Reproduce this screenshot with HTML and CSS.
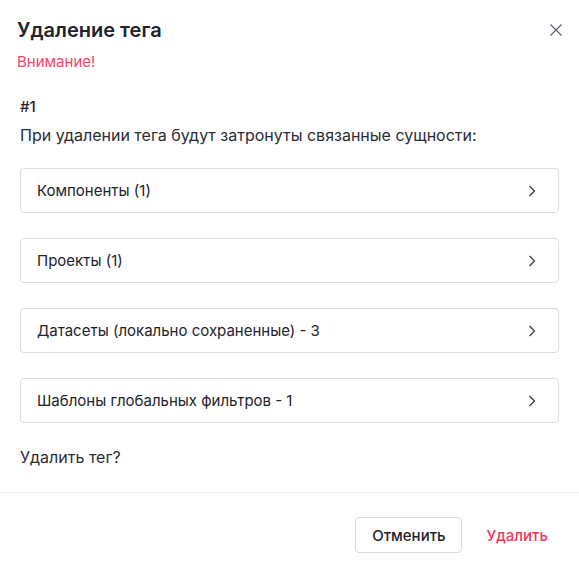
FILE: index.html
```html
<!DOCTYPE html>
<html lang="ru">
<head>
<meta charset="utf-8">
<link rel="stylesheet" href="styles.css">
</head>
<body>
<div class="modal">
  <div class="header">
    <div class="title-row">
      <h1 class="title">Удаление тега</h1>
      <button class="close" aria-label="Закрыть">
        <svg width="12" height="12" viewBox="0 0 12 12"><path d="M0.5 0.5L11.5 11.5M11.5 0.5L0.5 11.5" stroke="#5c5e6b" stroke-width="1.1" fill="none"/></svg>
      </button>
    </div>
    <div class="warning">Внимание!</div>
  </div>
  <div class="content">
    <div class="tag-id">#1</div>
    <div class="desc">При удалении тега будут затронуты связанные сущности:</div>
    <div class="list">
      <div class="item"><span>Компоненты (1)</span><svg class="chev" width="8" height="12" viewBox="0 0 8 12"><path d="M1.5 1L6.5 6L1.5 11" stroke="#3a3c47" stroke-width="1.3" fill="none"/></svg></div>
      <div class="item"><span>Проекты (1)</span><svg class="chev" width="8" height="12" viewBox="0 0 8 12"><path d="M1.5 1L6.5 6L1.5 11" stroke="#3a3c47" stroke-width="1.3" fill="none"/></svg></div>
      <div class="item"><span>Датасеты (локально сохраненные) - 3</span><svg class="chev" width="8" height="12" viewBox="0 0 8 12"><path d="M1.5 1L6.5 6L1.5 11" stroke="#3a3c47" stroke-width="1.3" fill="none"/></svg></div>
      <div class="item"><span>Шаблоны глобальных фильтров - 1</span><svg class="chev" width="8" height="12" viewBox="0 0 8 12"><path d="M1.5 1L6.5 6L1.5 11" stroke="#3a3c47" stroke-width="1.3" fill="none"/></svg></div>
    </div>
    <div class="question">Удалить тег?</div>
  </div>
  <div class="footer">
    <button class="btn btn-cancel">Отменить</button>
    <button class="btn btn-delete">Удалить</button>
  </div>
</div>
</body>
</html>
```
FILE: styles.css
```css
* { box-sizing: border-box; }
html, body { margin: 0; padding: 0; background: #fff; }
body {
  font-family: Inter, "Noto Sans", sans-serif;
  color: #22232b;
  width: 579px;
  height: 571px;
}
.modal { width: 579px; }
.header { padding: 16px 17px 0 17px; }
.title-row {
  display: flex;
  justify-content: space-between;
  align-items: center;
}
.title {
  margin: 0;
  font-size: 20px;
  line-height: 28px;
  font-weight: 600;
  color: #22232b;
}
.close {
  border: 0;
  background: none;
  padding: 0;
  width: 12px;
  height: 12px;
  display: flex;
}
.warning {
  margin-top: 8px;
  font-size: 15px;
  line-height: 20px;
  color: #f5456a;
  font-weight: 400;
}
.content { padding: 24px 20px 0 20px; }
.tag-id {
  font-size: 15px;
  line-height: 22px;
  font-weight: 500;
}
.desc {
  margin-top: 6px;
  font-size: 16px;
  line-height: 22px;
  color: #2b2c35;
}
.list {
  margin-top: 22px;
  display: flex;
  flex-direction: column;
  gap: 25px;
}
.item {
  height: 45px;
  border: 1px solid #dcdde8;
  border-radius: 4px;
  display: flex;
  align-items: center;
  justify-content: space-between;
  padding: 0 22px 0 16px;
  font-size: 15px;
  font-weight: 400;
  color: #22232b;
}
.question {
  margin-top: 23px;
  font-size: 16px;
  line-height: 22px;
  color: #2b2c35;
}
.footer {
  margin-top: 24px;
  border-top: 1px solid #ececf1;
  padding: 24px 12px 0 0;
  display: flex;
  justify-content: flex-end;
  gap: 5px;
}
.btn {
  height: 36px;
  font-family: inherit;
  font-size: 15px;
  font-weight: 500;
  border-radius: 4px;
  background: #fff;
  cursor: pointer;
}
.btn-cancel {
  width: 107px;
  border: 1px solid #d8d9e4;
  color: #1f2029;
}
.btn-delete {
  border: 0;
  color: #f0365f;
  padding: 0 19px;
}
```
